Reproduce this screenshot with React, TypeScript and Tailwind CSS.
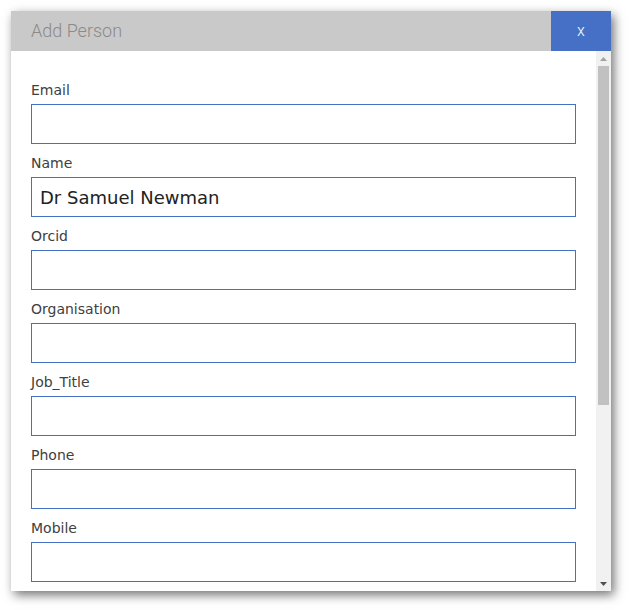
import { useState } from "react";

const fields = [
  { label: "Email", value: "" },
  { label: "Name", value: "Dr Samuel Newman" },
  { label: "Orcid", value: "" },
  { label: "Organisation", value: "" },
  { label: "Job_Title", value: "" },
  { label: "Phone", value: "" },
  { label: "Mobile", value: "" },
];

export default function App() {
  const [values, setValues] = useState(fields.map((f) => f.value));

  return (
    <div className="w-[630px] h-[610px] bg-white p-[11px]">
      <div className="w-[600px] h-[580px] flex flex-col bg-white shadow-[3px_4px_10px_rgba(0,0,0,0.55)]">
        {/* Header */}
        <div className="h-10 flex items-stretch bg-[#c9c9c9] shrink-0">
          <div className="flex-1 flex items-center pl-5 pb-[2px] font-['Roboto',sans-serif] font-light text-[18px] text-[#8a8a8a]">
            Add Person
          </div>
          <button className="w-[60px] bg-[#4570c6] text-white font-['Roboto',sans-serif] font-light text-[16px] flex items-center justify-center">
            x
          </button>
        </div>

        {/* Body */}
        <div className="flex-1 flex min-h-0">
          <div className="flex-1 overflow-hidden px-5 pt-[28px] font-['DejaVu_Sans',sans-serif]">
            {fields.map((field, i) => (
              <div key={field.label} className="mb-2">
                <label className="block h-5 leading-[22px] text-[14px] text-[#404040] mb-[5px]">
                  {field.label}
                </label>
                <input
                  type="text"
                  value={values[i]}
                  onChange={(e) =>
                    setValues(values.map((v, j) => (j === i ? e.target.value : v)))
                  }
                  className="block w-full h-10 border border-[#4570c6] px-2 text-[18px] text-[#222] outline-none"
                />
              </div>
            ))}
          </div>

          {/* Scrollbar */}
          <div className="w-[15px] bg-[#f1f1f1] flex flex-col items-center shrink-0">
            <div className="h-[15px] flex items-center justify-center">
              <svg width="7" height="4" viewBox="0 0 7 4">
                <path d="M0 4 L3.5 0 L7 4 Z" fill="#a3a3a3" />
              </svg>
            </div>
            <div className="flex-1 w-full px-[2px]">
              <div className="h-[339px] bg-[#c1c1c1]" />
            </div>
            <div className="h-[15px] flex items-center justify-center">
              <svg width="7" height="4" viewBox="0 0 7 4">
                <path d="M0 0 L7 0 L3.5 4 Z" fill="#505050" />
              </svg>
            </div>
          </div>
        </div>
      </div>
    </div>
  );
}
